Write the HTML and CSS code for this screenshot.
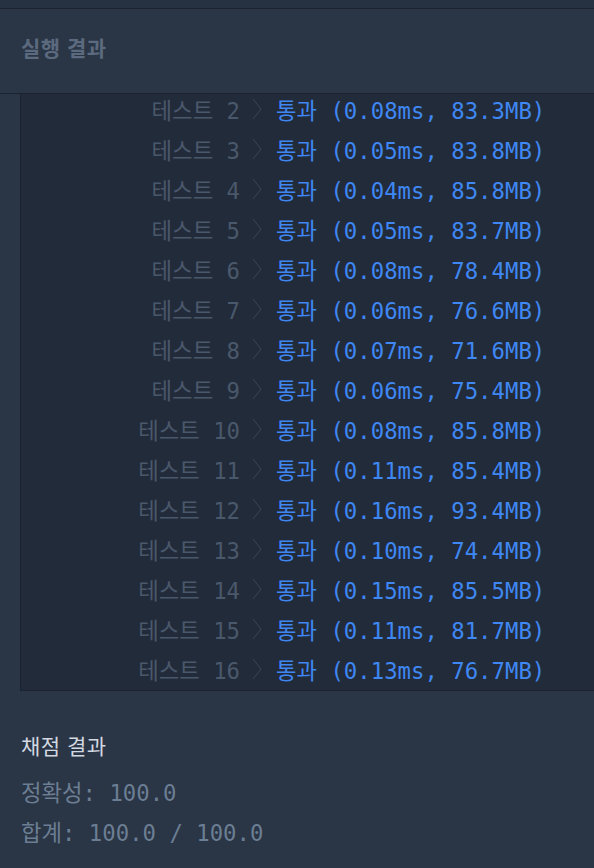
FILE: index.html
```html
<!DOCTYPE html>
<html lang="ko">
<head>
    <meta charset="UTF-8">
    <title>실행 결과</title>
    <link rel="stylesheet" href="styles.css">
</head>
<body>
    <div class="topbar"></div>
    <section class="run-result">
        <h2 class="run-title">실행 결과</h2>
        <div class="console">
            <ul class="test-list">
                <li class="test-row"><span class="test-name">테스트 2</span><svg class="chev" width="10" height="22" viewBox="0 0 10 22"><path d="M1 1l8 10-8 10" fill="none" stroke="currentColor" stroke-width="1"/></svg><span class="pass">통과 (0.08ms, 83.3MB)</span></li>
                <li class="test-row"><span class="test-name">테스트 3</span><svg class="chev" width="10" height="22" viewBox="0 0 10 22"><path d="M1 1l8 10-8 10" fill="none" stroke="currentColor" stroke-width="1"/></svg><span class="pass">통과 (0.05ms, 83.8MB)</span></li>
                <li class="test-row"><span class="test-name">테스트 4</span><svg class="chev" width="10" height="22" viewBox="0 0 10 22"><path d="M1 1l8 10-8 10" fill="none" stroke="currentColor" stroke-width="1"/></svg><span class="pass">통과 (0.04ms, 85.8MB)</span></li>
                <li class="test-row"><span class="test-name">테스트 5</span><svg class="chev" width="10" height="22" viewBox="0 0 10 22"><path d="M1 1l8 10-8 10" fill="none" stroke="currentColor" stroke-width="1"/></svg><span class="pass">통과 (0.05ms, 83.7MB)</span></li>
                <li class="test-row"><span class="test-name">테스트 6</span><svg class="chev" width="10" height="22" viewBox="0 0 10 22"><path d="M1 1l8 10-8 10" fill="none" stroke="currentColor" stroke-width="1"/></svg><span class="pass">통과 (0.08ms, 78.4MB)</span></li>
                <li class="test-row"><span class="test-name">테스트 7</span><svg class="chev" width="10" height="22" viewBox="0 0 10 22"><path d="M1 1l8 10-8 10" fill="none" stroke="currentColor" stroke-width="1"/></svg><span class="pass">통과 (0.06ms, 76.6MB)</span></li>
                <li class="test-row"><span class="test-name">테스트 8</span><svg class="chev" width="10" height="22" viewBox="0 0 10 22"><path d="M1 1l8 10-8 10" fill="none" stroke="currentColor" stroke-width="1"/></svg><span class="pass">통과 (0.07ms, 71.6MB)</span></li>
                <li class="test-row"><span class="test-name">테스트 9</span><svg class="chev" width="10" height="22" viewBox="0 0 10 22"><path d="M1 1l8 10-8 10" fill="none" stroke="currentColor" stroke-width="1"/></svg><span class="pass">통과 (0.06ms, 75.4MB)</span></li>
                <li class="test-row"><span class="test-name">테스트 10</span><svg class="chev" width="10" height="22" viewBox="0 0 10 22"><path d="M1 1l8 10-8 10" fill="none" stroke="currentColor" stroke-width="1"/></svg><span class="pass">통과 (0.08ms, 85.8MB)</span></li>
                <li class="test-row"><span class="test-name">테스트 11</span><svg class="chev" width="10" height="22" viewBox="0 0 10 22"><path d="M1 1l8 10-8 10" fill="none" stroke="currentColor" stroke-width="1"/></svg><span class="pass">통과 (0.11ms, 85.4MB)</span></li>
                <li class="test-row"><span class="test-name">테스트 12</span><svg class="chev" width="10" height="22" viewBox="0 0 10 22"><path d="M1 1l8 10-8 10" fill="none" stroke="currentColor" stroke-width="1"/></svg><span class="pass">통과 (0.16ms, 93.4MB)</span></li>
                <li class="test-row"><span class="test-name">테스트 13</span><svg class="chev" width="10" height="22" viewBox="0 0 10 22"><path d="M1 1l8 10-8 10" fill="none" stroke="currentColor" stroke-width="1"/></svg><span class="pass">통과 (0.10ms, 74.4MB)</span></li>
                <li class="test-row"><span class="test-name">테스트 14</span><svg class="chev" width="10" height="22" viewBox="0 0 10 22"><path d="M1 1l8 10-8 10" fill="none" stroke="currentColor" stroke-width="1"/></svg><span class="pass">통과 (0.15ms, 85.5MB)</span></li>
                <li class="test-row"><span class="test-name">테스트 15</span><svg class="chev" width="10" height="22" viewBox="0 0 10 22"><path d="M1 1l8 10-8 10" fill="none" stroke="currentColor" stroke-width="1"/></svg><span class="pass">통과 (0.11ms, 81.7MB)</span></li>
                <li class="test-row"><span class="test-name">테스트 16</span><svg class="chev" width="10" height="22" viewBox="0 0 10 22"><path d="M1 1l8 10-8 10" fill="none" stroke="currentColor" stroke-width="1"/></svg><span class="pass">통과 (0.13ms, 76.7MB)</span></li>
            </ul>
        </div>
    </section>
    <section class="score">
        <h3 class="score-title">채점 결과</h3>
        <p class="score-line">정확성: 100.0</p>
        <p class="score-line">합계: 100.0 / 100.0</p>
    </section>
</body>
</html>
```
FILE: styles.css
```css
:root {
    --page-bg: #2a3545;
    --console-bg: #222b3a;
    --line: #1b2330;
    --dim: #4a586b;
    --blue: #3f87f2;
    --mono: 'DejaVu Sans Mono', 'Noto Sans CJK KR', monospace;
}

* {
    margin: 0;
    padding: 0;
    box-sizing: border-box;
}

body {
    background: var(--page-bg);
    font-family: 'Noto Sans CJK KR', sans-serif;
    width: 594px;
    height: 868px;
    overflow: hidden;
}

.topbar {
    height: 9px;
    background: #263142;
    border-bottom: 1px solid var(--line);
}

.run-title {
    height: 85px;
    padding: 0 0 9px 21px;
    display: flex;
    align-items: center;
    font-size: 21px;
    font-weight: 700;
    letter-spacing: 0.5px;
    color: #5b6a7e;
    border-bottom: 1px solid var(--line);
}

.console {
    margin-left: 20px;
    height: 597px;
    background: var(--console-bg);
    border-left: 1px solid var(--line);
    border-bottom: 1px solid var(--line);
    overflow: hidden;
}

.test-list {
    list-style: none;
    margin-top: -5px;
}

.test-row {
    height: 40px;
    display: flex;
    align-items: center;
    font-family: var(--mono);
    font-size: 22.3px;
    white-space: pre;
}

.test-name {
    width: 219px;
    text-align: right;
    color: var(--dim);
}

.chev {
    color: #3a4557;
    margin: 0 14px 0 12px;
}

.pass {
    color: var(--blue);
}

.score {
    padding: 30px 21px 0;
}

.score-title {
    font-size: 21px;
    font-weight: 400;
    letter-spacing: 0.5px;
    color: #d3d9e1;
    height: 48px;
    display: flex;
    align-items: center;
    margin-bottom: 2px;
}

.score-line {
    height: 40px;
    display: flex;
    align-items: center;
    font-family: var(--mono);
    font-size: 22.3px;
    color: #6b7e93;
    white-space: pre;
}
```
